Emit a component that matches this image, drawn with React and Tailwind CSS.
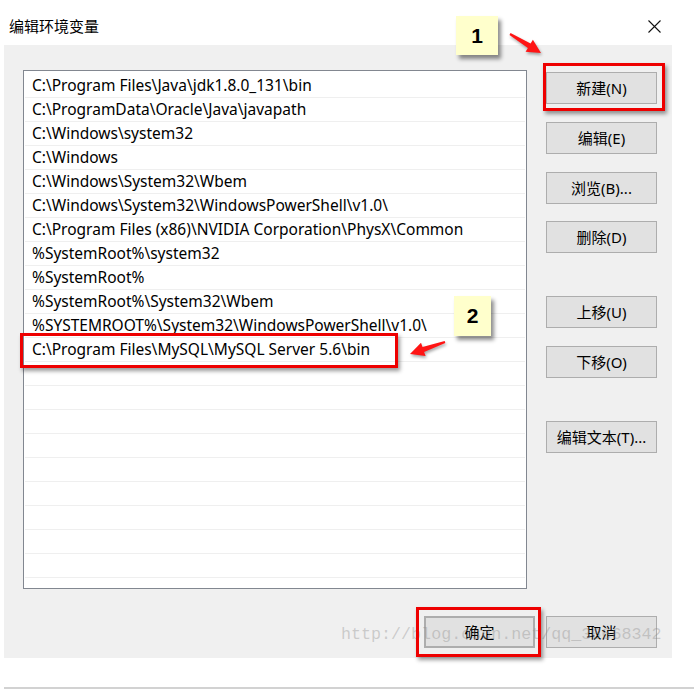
import React from "react";

const paths = [
  "C:\\Program Files\\Java\\jdk1.8.0_131\\bin",
  "C:\\ProgramData\\Oracle\\Java\\javapath",
  "C:\\Windows\\system32",
  "C:\\Windows",
  "C:\\Windows\\System32\\Wbem",
  "C:\\Windows\\System32\\WindowsPowerShell\\v1.0\\",
  "C:\\Program Files (x86)\\NVIDIA Corporation\\PhysX\\Common",
  "%SystemRoot%\\system32",
  "%SystemRoot%",
  "%SystemRoot%\\System32\\Wbem",
  "%SYSTEMROOT%\\System32\\WindowsPowerShell\\v1.0\\",
  "C:\\Program Files\\MySQL\\MySQL Server 5.6\\bin",
];

// pad with blank rows so the list fills the box
const rows = [...paths, ...Array(9).fill("")];

const Btn = ({ children, className = "" }) => (
  <button
    className={
      "w-[111px] h-[32px] bg-[#e1e1e1] border border-[#adadad] text-[15px] text-black flex items-center justify-center " +
      className
    }
  >
    {children}
  </button>
);

const Note = ({ n, className }) => (
  <div
    className={
      "absolute bg-[#ffffcc] flex items-center justify-center text-[21px] font-bold text-black shadow-[3px_4px_4px_rgba(0,0,0,0.45)] " +
      className
    }
    style={{ fontFamily: "'Liberation Sans', Arial, sans-serif" }}
  >
    {n}
  </div>
);

// tapered arrow from tail (x1,y1) to tip (x2,y2)
function arrowPoints(x1, y1, x2, y2) {
  const dx = x2 - x1;
  const dy = y2 - y1;
  const len = Math.hypot(dx, dy);
  const ux = dx / len;
  const uy = dy / len;
  const nx = -uy;
  const ny = ux;
  const neck = [x1 + dx * 0.62, y1 + dy * 0.62];
  const p = (b, k) => `${(b[0] + nx * k).toFixed(1)},${(b[1] + ny * k).toFixed(1)}`;
  const tail = [x1, y1];
  return [
    p(tail, -1),
    p(neck, -2.6),
    p(neck, -7),
    `${x2},${y2}`,
    p(neck, 7),
    p(neck, 2.6),
    p(tail, 1),
  ].join(" ");
}

export default function App() {
  return (
    <div
      className="relative w-[694px] h-[699px] bg-white overflow-hidden text-black"
      style={{ fontFamily: "'Noto Sans', 'Noto Sans CJK SC', sans-serif" }}
    >
      {/* title bar */}
      <div className="h-[45px] flex items-center justify-between pt-[8px] pl-[9px] pr-[33px]">
        <span className="text-[15px] leading-none">编辑环境变量</span>
        <svg width="13" height="13" viewBox="0 0 13 13">
          <path d="M0.5 0.5 L12.5 12.5 M12.5 0.5 L0.5 12.5" stroke="#111" strokeWidth="1.1" />
        </svg>
      </div>

      {/* body */}
      <div className="ml-[4px] w-[668px] h-[613px] bg-[#f0f0f0] flex flex-col">
        <div className="flex pt-[25px] pl-[19px]">
          <div className="w-[504px] h-[519px] bg-white border border-[#828790] pt-[3px] px-[1px] overflow-hidden">
            {rows.map((p, i) => (
              <div
                key={i}
                className="h-[24px] border-b border-[#efefef] flex items-center pl-[7px] text-[15.5px] leading-none whitespace-nowrap"
              >
                {p}
              </div>
            ))}
          </div>
          <div className="ml-[19px] pt-[2px] flex flex-col">
            <Btn>新建(N)</Btn>
            <Btn className="mt-[18px]">编辑(E)</Btn>
            <Btn className="mt-[18px]">浏览(B)...</Btn>
            <Btn className="mt-[17px]">删除(D)</Btn>
            <Btn className="mt-[43px]">上移(U)</Btn>
            <Btn className="mt-[18px]">下移(O)</Btn>
            <Btn className="mt-[43px]">编辑文本(T)...</Btn>
          </div>
        </div>
        <div className="flex justify-end gap-[11px] pr-[15px] mt-[27px]">
          <Btn className="border-2 border-[#0078d7]">确定</Btn>
          <Btn>取消</Btn>
        </div>
      </div>

      <div className="mt-[29px] ml-[4px] h-[2px] bg-[#d2d2d2]" />

      {/* watermark */}
      <div
        className="absolute left-[341px] top-[627px] text-[16.7px] leading-none text-[rgba(140,140,140,0.38)] whitespace-nowrap"
        style={{ fontFamily: "'Liberation Mono', monospace" }}
      >
        http://blog.csdn.net/qq_36668342
      </div>

      {/* annotations */}
      <Note n="1" className="left-[456px] top-[16px] w-[42px] h-[39px]" />
      <div className="absolute left-[543px] top-[63px] w-[122px] h-[48px] border-[3px] border-[#ee0000] shadow-[2px_3px_4px_rgba(0,0,0,0.4)]" />

      <Note n="2" className="left-[454px] top-[296px] w-[37px] h-[40px]" />
      <div className="absolute left-[20px] top-[333px] w-[378px] h-[35px] border-[3px] border-[#ee0000] shadow-[2px_3px_4px_rgba(0,0,0,0.4)]" />

      <div className="absolute left-[416px] top-[607px] w-[125px] h-[50px] border-[3px] border-[#ee0000] shadow-[2px_3px_4px_rgba(0,0,0,0.4)]" />

      <svg
        className="absolute inset-0 pointer-events-none"
        width="694"
        height="699"
        style={{ filter: "drop-shadow(1px 2px 1.5px rgba(0,0,0,0.35))" }}
      >
        <polygon points={arrowPoints(510, 34, 541, 53)} fill="#ff1414" />
        <polygon points={arrowPoints(445, 342, 410, 354)} fill="#ff1414" />
      </svg>
    </div>
  );
}
